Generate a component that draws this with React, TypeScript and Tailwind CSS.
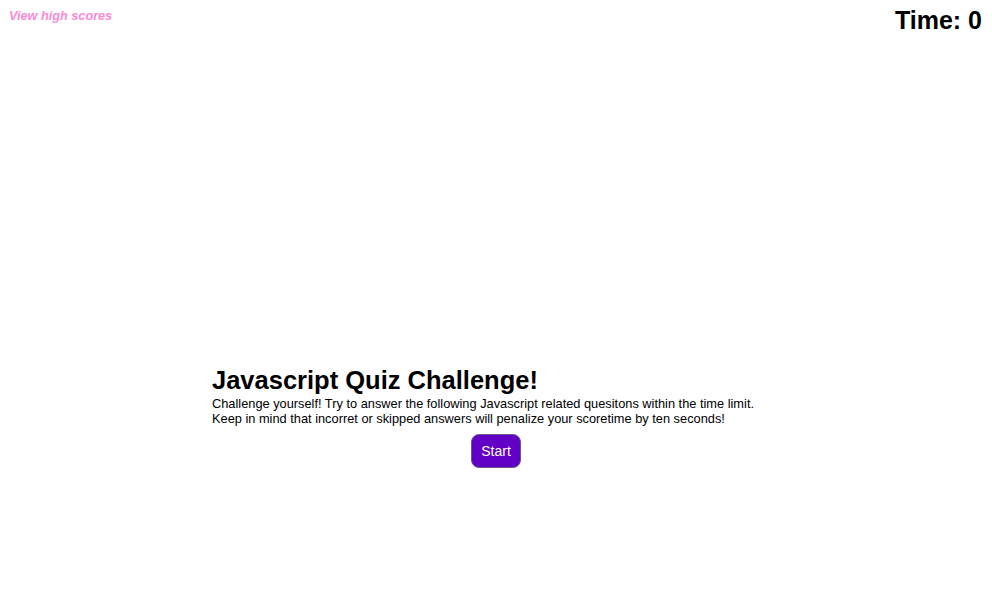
export default function App() {
  return (
    <div className="min-h-[593px] bg-white text-black font-['Liberation_Sans',Arial,sans-serif]">
      <header className="flex justify-between items-start">
        <a href="#" className="mt-[9px] ml-[9px] text-[12.7px] leading-[15px] font-bold italic text-[#f78bd6]">
          View high scores
        </a>
        <h2 className="mt-[6px] mr-[10px] text-[25px] leading-[29px] font-bold">Time: 0</h2>
      </header>

      <main className="w-[568px] mx-auto mt-[330px] flex flex-col">
        <h1 className="text-[25.5px] leading-[31px] font-bold">Javascript Quiz Challenge!</h1>
        <p className="text-[12.8px] leading-[15px]">
          Challenge yourself! Try to answer the following Javascript related quesitons within the time limit.
          <br />
          Keep in mind that incorret or skipped answers will penalize your scoretime by ten seconds!
        </p>
        <button className="self-center mt-[8px] h-[34px] px-[9px] rounded-[8px] border border-[#6b5a86] bg-[#6300c6] text-white text-[14px]">
          Start
        </button>
      </main>
    </div>
  )
}
